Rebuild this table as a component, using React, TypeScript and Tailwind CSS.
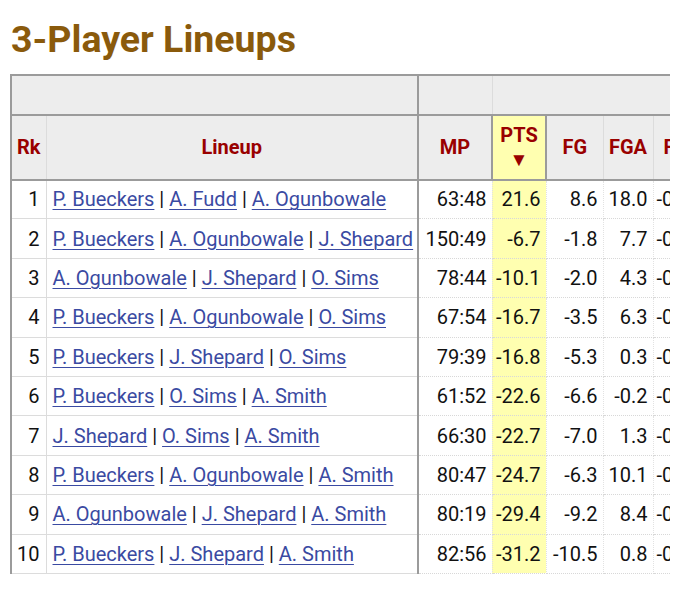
import React from "react";

type Row = {
  rk: number;
  players: string[];
  mp: string;
  pts: string;
  fg: string;
  fga: string;
  fgp: string;
};

const rows: Row[] = [
  { rk: 1, players: ["P. Bueckers", "A. Fudd", "A. Ogunbowale"], mp: "63:48", pts: "21.6", fg: "8.6", fga: "18.0", fgp: "-0.1" },
  { rk: 2, players: ["P. Bueckers", "A. Ogunbowale", "J. Shepard"], mp: "150:49", pts: "-6.7", fg: "-1.8", fga: "7.7", fgp: "-0.2" },
  { rk: 3, players: ["A. Ogunbowale", "J. Shepard", "O. Sims"], mp: "78:44", pts: "-10.1", fg: "-2.0", fga: "4.3", fgp: "-0.1" },
  { rk: 4, players: ["P. Bueckers", "A. Ogunbowale", "O. Sims"], mp: "67:54", pts: "-16.7", fg: "-3.5", fga: "6.3", fgp: "-0.1" },
  { rk: 5, players: ["P. Bueckers", "J. Shepard", "O. Sims"], mp: "79:39", pts: "-16.8", fg: "-5.3", fga: "0.3", fgp: "-0.1" },
  { rk: 6, players: ["P. Bueckers", "O. Sims", "A. Smith"], mp: "61:52", pts: "-22.6", fg: "-6.6", fga: "-0.2", fgp: "-0.2" },
  { rk: 7, players: ["J. Shepard", "O. Sims", "A. Smith"], mp: "66:30", pts: "-22.7", fg: "-7.0", fga: "1.3", fgp: "-0.1" },
  { rk: 8, players: ["P. Bueckers", "A. Ogunbowale", "A. Smith"], mp: "80:47", pts: "-24.7", fg: "-6.3", fga: "10.1", fgp: "-0.1" },
  { rk: 9, players: ["A. Ogunbowale", "J. Shepard", "A. Smith"], mp: "80:19", pts: "-29.4", fg: "-9.2", fga: "8.4", fgp: "-0.1" },
  { rk: 10, players: ["P. Bueckers", "J. Shepard", "A. Smith"], mp: "82:56", pts: "-31.2", fg: "-10.5", fga: "0.8", fgp: "-0.2" },
];

const th = "bg-[#ededed] text-[#900] font-bold align-middle border border-[#dcdcdc]";
const cellBorders = "border-l border-r border-l-[#e2e2e2] border-r-[#e2e2e2] border-b border-b-[#d8d8d8] border-dotted";
const stat = `text-right pr-[5px] pl-[2px] ${cellBorders}`;

const App = () => {
  return (
    <div className="min-h-[589px] bg-white font-['Roboto','Liberation_Sans',sans-serif] text-[#111]">
      <h2 className="pl-[11px] pt-[21px] text-[37.5px] leading-none font-bold text-[#8a5a0c]">
        3-Player Lineups
      </h2>

      <div className="mt-[15px] ml-[10px] w-[660px] overflow-hidden">
        <table className="table-fixed border-collapse w-[740px] text-[20px] leading-none">
          <colgroup>
            <col className="w-[35px]" />
            <col className="w-[372px]" />
            <col className="w-[74px]" />
            <col className="w-[54px]" />
            <col className="w-[57px]" />
            <col className="w-[50px]" />
            <col className="w-[98px]" />
          </colgroup>
          <thead>
            <tr className="h-[40px]">
              <th colSpan={2} className="bg-[#ededed] border-2 border-[#9b9b9b]" />
              <th className="bg-[#ededed] border-2 border-[#9b9b9b] border-r border-r-[#dcdcdc]" />
              <th colSpan={4} className="bg-[#ededed] border-2 border-[#9b9b9b] border-l-0" />
            </tr>
            <tr className="h-[65px]">
              <th className={`${th} text-center px-[4px] border-l-2 border-l-[#9b9b9b] border-b-2 border-b-[#9b9b9b]`}>Rk</th>
              <th className={`${th} text-center px-[4px] border-r-2 border-r-[#9b9b9b] border-b-2 border-b-[#9b9b9b]`}>Lineup</th>
              <th className={`${th} text-center px-[4px] border-b-2 border-b-[#9b9b9b]`}>MP</th>
              <th className="bg-[#ffffb0] text-[#900] font-bold text-center align-middle border-2 border-[#9b9b9b] px-[2px]">
                <div className="flex flex-col items-center gap-[5px]">
                  <span>PTS</span>
                  <span className="text-[19px] leading-none">▼</span>
                </div>
              </th>
              <th className={`${th} text-center px-[4px] border-b-2 border-b-[#9b9b9b]`}>FG</th>
              <th className={`${th} text-center px-[4px] border-b-2 border-b-[#9b9b9b]`}>FGA</th>
              <th className={`${th} text-left pl-[10px] border-b-2 border-b-[#9b9b9b]`}>FG%</th>
            </tr>
          </thead>
          <tbody>
            {rows.map((r) => (
              <tr key={r.rk} className="h-[39.4px]">
                <td className="text-right pr-[6px] border-l-2 border-l-[#9b9b9b] border-r border-r-[#dcdcdc] border-b border-b-[#dcdcdc]">
                  {r.rk}
                </td>
                <td className="pl-[6px] whitespace-nowrap border-r-2 border-r-[#9b9b9b] border-b border-b-[#dcdcdc]">
                  {r.players.map((p, i) => (
                    <React.Fragment key={p}>
                      {i > 0 && <span> | </span>}
                      <a href="#" className="text-[#3a4aa2] underline decoration-1 underline-offset-[3px]">
                        {p}
                      </a>
                    </React.Fragment>
                  ))}
                </td>
                <td className={stat}>{r.mp}</td>
                <td className={`${stat} bg-[#ffffb0]`}>{r.pts}</td>
                <td className={stat}>{r.fg}</td>
                <td className={stat}>{r.fga}</td>
                <td className={`text-left pl-[3px] ${cellBorders}`}>{r.fgp}</td>
              </tr>
            ))}
          </tbody>
        </table>
      </div>
    </div>
  );
};

export default App;
